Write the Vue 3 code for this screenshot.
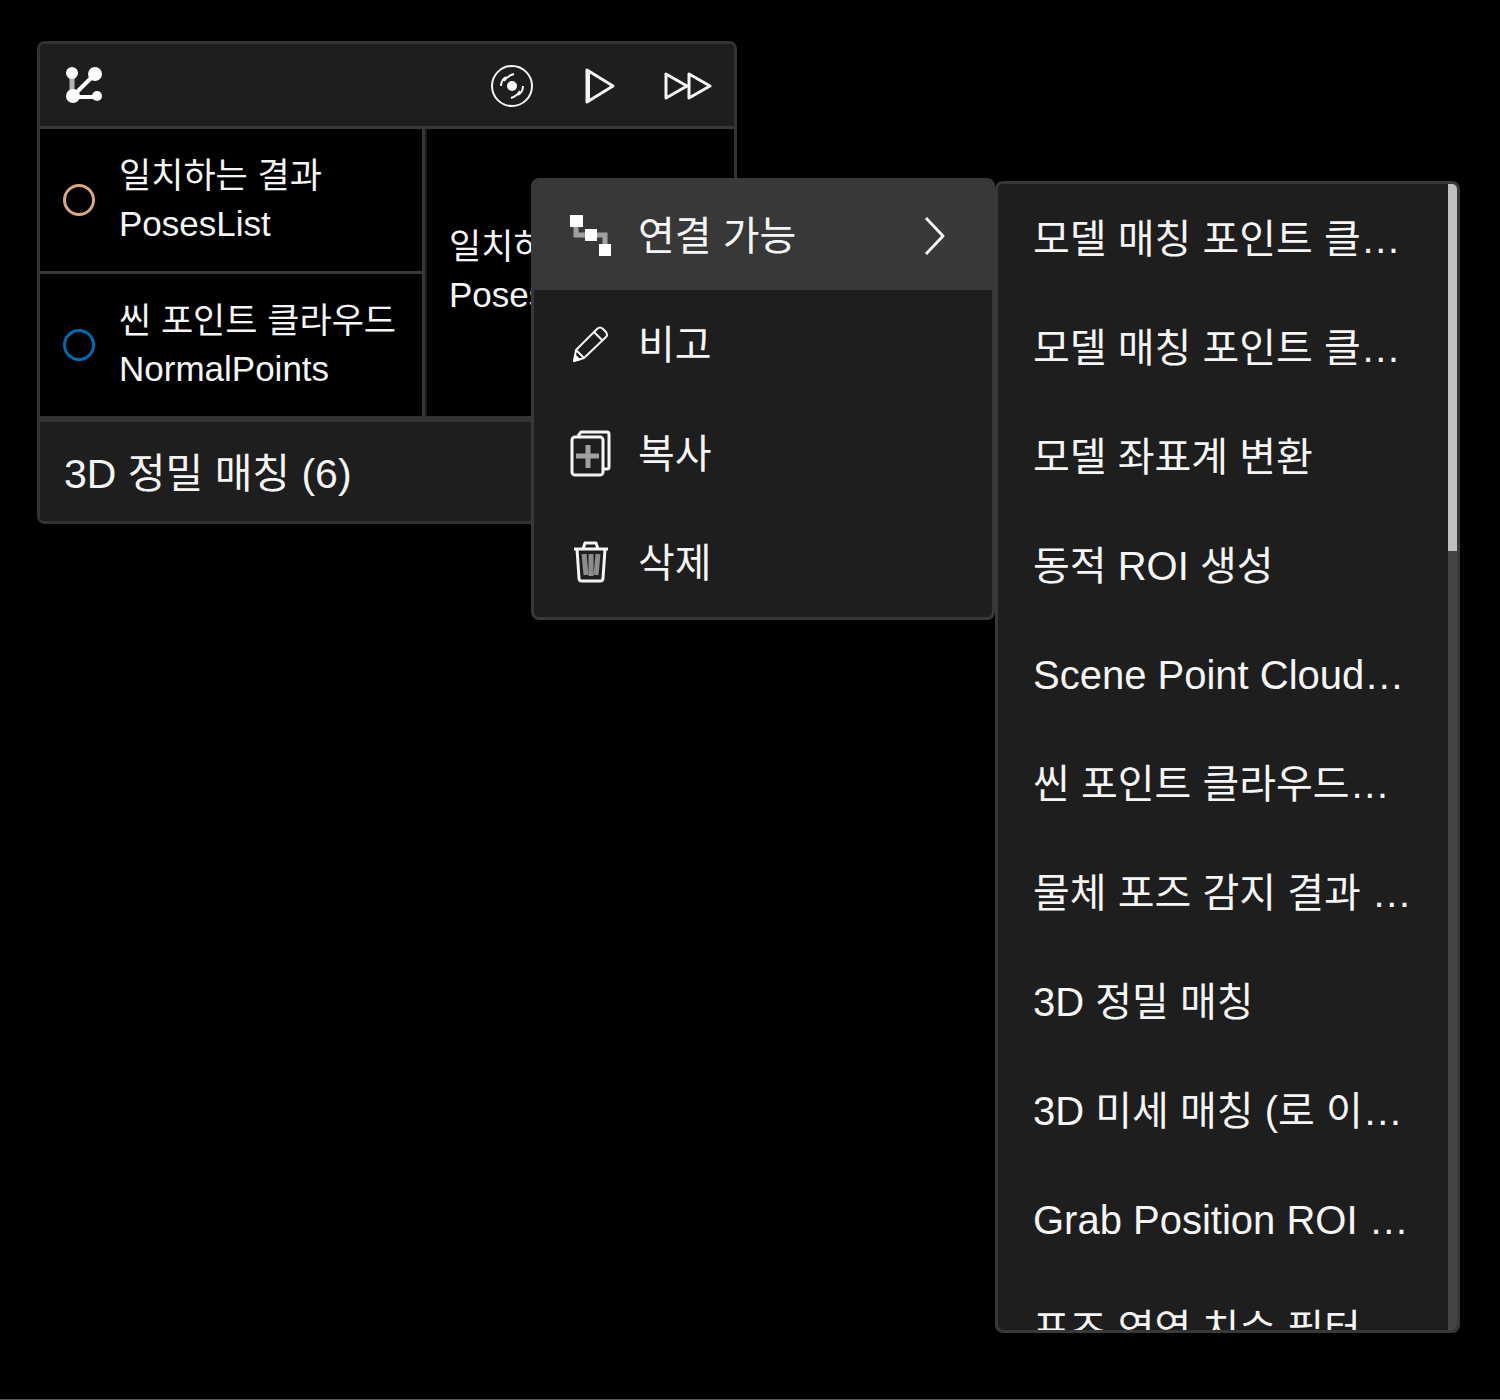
<template>
  <main class="canvas">
    <!-- 步骤节点 -->
    <section class="node">
      <header class="node-header">
        <svg class="node-logo" viewBox="0 0 40 40" width="40" height="40">
          <path d="M8 7v24" stroke="#b4b4b4" stroke-width="5" />
          <path d="M9 31L30 10M9 32h24" stroke="#fff" stroke-width="4" />
          <circle cx="8" cy="8" r="6" />
          <circle cx="31" cy="9" r="7" />
          <circle cx="9" cy="31" r="7" />
          <circle cx="33" cy="31" r="5" />
        </svg>
        <div class="node-actions">
          <button class="action" aria-label="preview">
            <svg class="line" viewBox="0 0 48 48" width="48" height="48">
              <circle cx="24" cy="25" r="20" stroke-width="2" />
              <path d="M13 25q0-6 5-9M16 20q3-5 10-7M35 25q0 6-5 9M32 30q-3 5-9 7" stroke-width="2" />
              <circle class="solid" cx="24" cy="25" r="5" />
            </svg>
          </button>
          <button class="action" aria-label="run">
            <svg class="line" viewBox="0 0 48 48" width="48" height="48">
              <path d="M11 9v32l26-16z" />
              <path d="M12 12v26" stroke-width="4" />
            </svg>
          </button>
          <button class="action" aria-label="run all">
            <svg class="line" viewBox="0 0 48 48" width="48" height="48">
              <path d="M2 13v24l21-12zM25 13v24l21-12z" />
            </svg>
          </button>
        </div>
      </header>

      <div class="node-body">
        <div class="inputs">
          <div v-for="port in inputs" :key="port.type" class="port">
            <span class="ring" :class="port.color"></span>
            <p>{{ port.name }}<br />{{ port.type }}</p>
          </div>
        </div>
        <div class="output">
          <p>일치하는 결과<br />PosesList</p>
        </div>
      </div>

      <footer class="node-footer">3D 정밀 매칭 (6)</footer>
    </section>

    <!-- 右键菜单 -->
    <div class="menus">
      <ul class="menu">
        <li v-for="item in menu" :key="item.icon">
          <button
            class="menu-item"
            :class="{ active: active === item.icon }"
            @mouseenter="active = item.icon"
          >
            <svg v-if="item.icon === 'link'" viewBox="0 0 42 47" width="42" height="47">
              <path d="M6 15v8h10M27 23h8v9" stroke="#a0a0a0" stroke-width="5" fill="none" />
              <path d="M0 3h13v12H0zM15 17h12v12H15zM29 32h12v12H29z" fill="#fff" />
            </svg>
            <svg v-else-if="item.icon === 'edit'" class="line thin" viewBox="0 0 42 47" width="42" height="47">
              <path d="M4 40l2-11L27 8q3-3 6 0l3 3q2 3 0 5L14 37zM24 11l9 9M6 29l8 8" />
              <path class="solid" d="M3 41l2-8 6 6z" />
            </svg>
            <svg v-else-if="item.icon === 'copy'" class="line" viewBox="0 0 42 47" width="42" height="47">
              <path d="M8 6l3-4h26q2 0 2 2v33q0 2-2 2h-4" />
              <rect x="2" y="7" width="31" height="38" rx="3" />
              <path d="M6 26h23M18 15v23" stroke="#a0a0a0" stroke-width="5" />
            </svg>
            <svg v-else class="line" viewBox="0 0 42 47" width="42" height="47">
              <path d="M4 10h34M13 10l2-6h11l2 6M7 10l2 29q0 3 3 3h18q3 0 3-3l2-29" />
              <path d="M14 15l2 21M21 15v22M28 15l-2 21" stroke="#8c8c8c" stroke-width="5" />
            </svg>
            <span class="label">{{ item.label }}</span>
            <svg v-if="item.icon === 'link'" class="line arrow" viewBox="0 0 22 40" width="22" height="40">
              <path d="M2 2l17 18L2 38" />
            </svg>
          </button>
        </li>
      </ul>

      <div class="submenu">
        <ul class="submenu-list">
          <li v-for="(step, idx) in steps" :key="idx">
            <button class="menu-item">{{ step }}</button>
          </li>
        </ul>
        <div class="scrollbar"><div class="thumb"></div></div>
      </div>
    </div>
  </main>
</template>

<script setup>
import { ref } from 'vue'

const inputs = [
  { name: '일치하는 결과', type: 'PosesList', color: 'orange' },
  { name: '씬 포인트 클라우드', type: 'NormalPoints', color: 'blue' }
]

const menu = [
  { icon: 'link', label: '연결 가능' },
  { icon: 'edit', label: '비고' },
  { icon: 'copy', label: '복사' },
  { icon: 'delete', label: '삭제' }
]

const steps = [
  '모델 매칭 포인트 클…',
  '모델 매칭 포인트 클…',
  '모델 좌표계 변환',
  '동적 ROI 생성',
  'Scene Point Cloud…',
  '씬 포인트 클라우드…',
  '물체 포즈 감지 결과 …',
  '3D 정밀 매칭',
  '3D 미세 매칭 (로 이…',
  'Grab Position ROI …',
  '포즈 영역 치수 필터'
]

const active = ref('link')
</script>

<style>
body {
  background: #000;
}
</style>

<style scoped>
.canvas {
  position: relative;
  box-sizing: border-box;
  min-height: 100vh;
  overflow: hidden;
  background: #000;
  border-bottom: 1px solid #5a5a5a;
  color: #f5f5f5;
  font-family: "Liberation Sans", "Noto Sans CJK KR", sans-serif;
  font-size: 40px;
  line-height: 48px;
}

ul {
  list-style: none;
  margin: 0;
  padding: 0;
}

p {
  margin: 0;
}

button {
  border: none;
  background: none;
  padding: 0;
  color: inherit;
  font: inherit;
  cursor: pointer;
}

svg {
  display: block;
  flex: none;
}

.line {
  fill: none;
  stroke: #f5f5f5;
  stroke-width: 3;
  stroke-linejoin: round;
}
.line.thin {
  stroke-width: 2;
}
.solid {
  fill: #fff;
  stroke: none;
}

/* 节点 */
.node {
  position: absolute;
  left: 37px;
  top: 41px;
  box-sizing: border-box;
  width: 700px;
  border: 3px solid #333;
  border-radius: 8px;
  overflow: hidden;
}

.node-header {
  display: flex;
  align-items: center;
  justify-content: space-between;
  height: 82px;
  padding: 0 22px 0 24px;
  background: #1e1e1e;
  border-bottom: 3px solid #383838;
}

.node-logo {
  fill: #fff;
}

.node-actions {
  display: flex;
  gap: 40px;
}

.node-body {
  display: flex;
  font-size: 35px;
  white-space: nowrap;
}

.inputs {
  flex: none;
  width: 382px;
  border-right: 3px solid #383838;
  box-shadow: 2px 0 #1a1a1a;
}

.port {
  display: flex;
  align-items: center;
  gap: 24px;
  height: 142px;
  padding-left: 23px;
}
.port + .port {
  border-top: 3px solid #383838;
}

.ring {
  box-sizing: border-box;
  width: 32px;
  height: 32px;
  border: 3px solid;
  border-radius: 50%;
}
.ring.orange {
  border-color: #d9a883;
}
.ring.blue {
  border-color: #006bb0;
}

.output {
  display: flex;
  flex: 1;
  align-items: center;
  padding: 0 0 4px 24px;
}

.node-footer {
  padding: 28px 24px 23px;
  background: #1e1e1e;
  border-top: 6px solid #333;
  font-size: 41px;
}

/* 菜单 */
.menus {
  position: absolute;
  left: 531px;
  top: 178px;
  display: flex;
  align-items: flex-start;
}

.menu,
.submenu {
  box-sizing: border-box;
  width: 464px;
  background: #1e1e1e;
  border: 3px solid #383838;
  border-radius: 8px;
  overflow: hidden;
}

.menu-item {
  display: flex;
  align-items: center;
  gap: 26px;
  width: 100%;
  height: 109px;
  padding: 0 46px 0 36px;
  text-align: left;
  white-space: nowrap;
}
.menu-item.active {
  background: #383838;
}

.label {
  flex: 1;
}

.submenu {
  display: flex;
  width: 465px;
  height: calc(100vh - 248px);
  margin-top: 3px;
}

.submenu-list {
  flex: 1;
  min-width: 0;
  overflow: hidden;
}
.submenu-list .menu-item {
  padding: 0 0 0 35px;
}

.scrollbar {
  flex: none;
  width: 9px;
  background: #444;
}

.thumb {
  height: 32%;
  background: #c0c0c0;
}
</style>
